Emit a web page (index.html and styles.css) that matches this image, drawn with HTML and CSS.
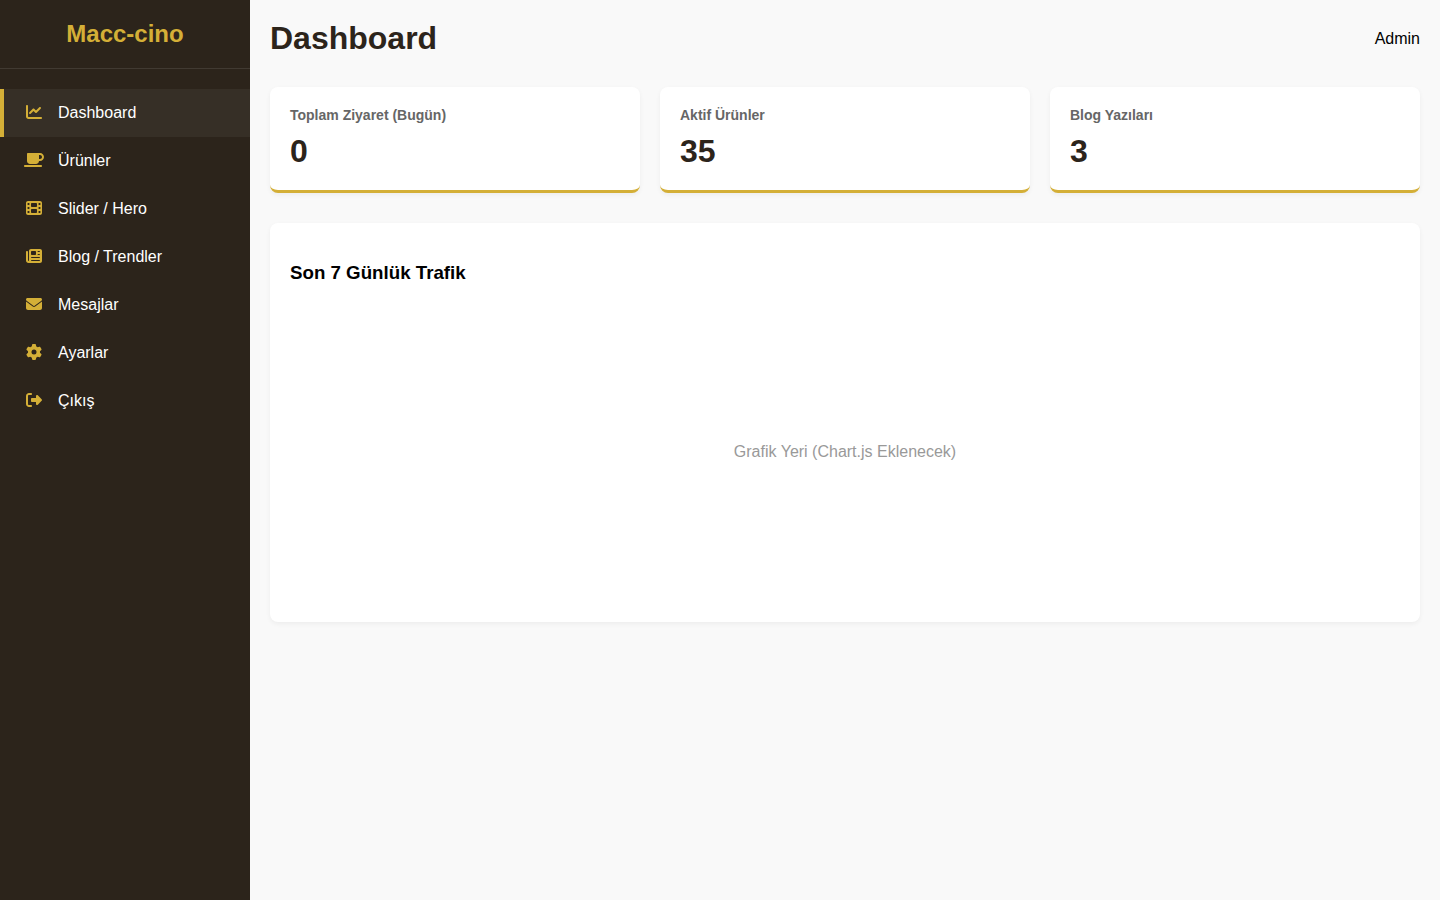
FILE: index.html
```html
<!DOCTYPE html>
<html lang="tr">
<head>
<meta charset="UTF-8">
<meta name="viewport" content="width=device-width, initial-scale=1.0">
<title>Dashboard</title>
<link rel="stylesheet" href="styles.css">
</head>
<body>

<aside class="sidebar">
    <h2 class="brand">Macc-cino</h2>
    <nav class="menu">
        <a href="#" class="active">
            <svg class="icon" viewBox="0 0 512 512" aria-hidden="true"><path d="M64 64c0-17.7-14.3-32-32-32S0 46.3 0 64V400c0 44.2 35.8 80 80 80H480c17.7 0 32-14.3 32-32s-14.3-32-32-32H80c-8.8 0-16-7.2-16-16V64zm406.6 86.6c12.5-12.5 12.5-32.8 0-45.3s-32.8-12.5-45.3 0L320 210.7l-57.4-57.4c-12.5-12.5-32.8-12.5-45.3 0l-112 112c-12.5 12.5-12.5 32.8 0 45.3s32.8 12.5 45.3 0L240 221.3l57.4 57.4c12.5 12.5 32.8 12.5 45.3 0l128-128z"/></svg>
            Dashboard
        </a>
        <a href="#">
            <svg class="icon" viewBox="0 0 640 512" aria-hidden="true"><path d="M96 64c0-17.7 14.3-32 32-32H448h64c70.7 0 128 57.3 128 128s-57.3 128-128 128H480c0 53-43 96-96 96H192c-53 0-96-43-96-96V64zM480 224h32c35.3 0 64-28.7 64-64s-28.7-64-64-64H480V224zM32 416H544c17.7 0 32 14.3 32 32s-14.3 32-32 32H32c-17.7 0-32-14.3-32-32s14.3-32 32-32z"/></svg>
            Ürünler
        </a>
        <a href="#">
            <svg class="icon" viewBox="0 0 512 512" aria-hidden="true"><path d="M0 96C0 60.7 28.7 32 64 32H448c35.3 0 64 28.7 64 64V416c0 35.3-28.7 64-64 64H64c-35.3 0-64-28.7-64-64V96zM48 368v32c0 8.8 7.2 16 16 16H96c8.8 0 16-7.2 16-16V368c0-8.8-7.2-16-16-16H64c-8.8 0-16 7.2-16 16zm368-16c-8.8 0-16 7.2-16 16v32c0 8.8 7.2 16 16 16h32c8.8 0 16-7.2 16-16V368c0-8.8-7.2-16-16-16H416zM48 240v32c0 8.8 7.2 16 16 16H96c8.8 0 16-7.2 16-16V240c0-8.8-7.2-16-16-16H64c-8.8 0-16 7.2-16 16zm368-16c-8.8 0-16 7.2-16 16v32c0 8.8 7.2 16 16 16h32c8.8 0 16-7.2 16-16V240c0-8.8-7.2-16-16-16H416zM48 112v32c0 8.8 7.2 16 16 16H96c8.8 0 16-7.2 16-16V112c0-8.8-7.2-16-16-16H64c-8.8 0-16 7.2-16 16zM416 96c-8.8 0-16 7.2-16 16v32c0 8.8 7.2 16 16 16h32c8.8 0 16-7.2 16-16V112c0-8.8-7.2-16-16-16H416zM160 128v64c0 17.7 14.3 32 32 32H320c17.7 0 32-14.3 32-32V128c0-17.7-14.3-32-32-32H192c-17.7 0-32 14.3-32 32zm32 160c-17.7 0-32 14.3-32 32v64c0 17.7 14.3 32 32 32H320c17.7 0 32-14.3 32-32V320c0-17.7-14.3-32-32-32H192z"/></svg>
            Slider / Hero
        </a>
        <a href="#">
            <svg class="icon" viewBox="0 0 512 512" aria-hidden="true"><path d="M96 96c0-35.3 28.7-64 64-64H448c35.3 0 64 28.7 64 64V416c0 35.3-28.7 64-64 64H80c-44.2 0-80-35.8-80-80V128c0-17.7 14.3-32 32-32s32 14.3 32 32V400c0 8.8 7.2 16 16 16s16-7.2 16-16V96zm64 24v80c0 13.3 10.7 24 24 24H296c13.3 0 24-10.7 24-24V120c0-13.3-10.7-24-24-24H184c-13.3 0-24 10.7-24 24zm208-8c0 8.8 7.2 16 16 16h48c8.8 0 16-7.2 16-16s-7.2-16-16-16H384c-8.8 0-16 7.2-16 16zm0 96c0 8.8 7.2 16 16 16h48c8.8 0 16-7.2 16-16s-7.2-16-16-16H384c-8.8 0-16 7.2-16 16zM160 304c0 8.8 7.2 16 16 16H432c8.8 0 16-7.2 16-16s-7.2-16-16-16H176c-8.8 0-16 7.2-16 16zm0 96c0 8.8 7.2 16 16 16H432c8.8 0 16-7.2 16-16s-7.2-16-16-16H176c-8.8 0-16 7.2-16 16z"/></svg>
            Blog / Trendler
        </a>
        <a href="#">
            <svg class="icon" viewBox="0 0 512 512" aria-hidden="true"><path d="M48 64C21.5 64 0 85.5 0 112c0 15.1 7.1 29.3 19.2 38.4L236.8 313.6c11.4 8.5 27 8.5 38.4 0L492.8 150.4c12.1-9.1 19.2-23.3 19.2-38.4c0-26.5-21.5-48-48-48H48zM0 176V384c0 35.3 28.7 64 64 64H448c35.3 0 64-28.7 64-64V176L294.4 339.2c-22.8 17.1-54 17.1-76.8 0L0 176z"/></svg>
            Mesajlar
        </a>
        <a href="#">
            <svg class="icon" viewBox="0 0 512 512" aria-hidden="true"><path d="M495.9 166.6c3.2 8.7 .5 18.4-6.4 24.6l-43.3 39.4c1.1 8.3 1.7 16.8 1.7 25.4s-.6 17.1-1.7 25.4l43.3 39.4c6.9 6.2 9.6 15.9 6.4 24.6c-4.4 11.9-9.7 23.3-15.8 34.3l-4.7 8.1c-6.6 11-14 21.4-22.1 31.2c-5.9 7.2-15.7 9.6-24.5 6.8l-55.7-17.7c-13.4 10.3-28.2 18.9-44 25.4l-12.5 57.1c-2 9.1-9 16.3-18.2 17.8c-13.8 2.3-28 3.5-42.5 3.5s-28.7-1.2-42.5-3.5c-9.2-1.5-16.2-8.7-18.2-17.8l-12.5-57.1c-15.8-6.5-30.6-15.1-44-25.4L83.1 425.9c-8.8 2.8-18.6 .3-24.5-6.8c-8.1-9.8-15.5-20.2-22.1-31.2l-4.7-8.1c-6.1-11-11.4-22.4-15.8-34.3c-3.2-8.7-.5-18.4 6.4-24.6l43.3-39.4C64.6 273.1 64 264.6 64 256s.6-17.1 1.7-25.4L22.4 191.2c-6.9-6.2-9.6-15.9-6.4-24.6c4.4-11.9 9.7-23.3 15.8-34.3l4.7-8.1c6.6-11 14-21.4 22.1-31.2c5.9-7.2 15.7-9.6 24.5-6.8l55.7 17.7c13.4-10.3 28.2-18.9 44-25.4l12.5-57.1c2-9.1 9-16.3 18.2-17.8C227.3 1.2 241.5 0 256 0s28.7 1.2 42.5 3.5c9.2 1.5 16.2 8.7 18.2 17.8l12.5 57.1c15.8 6.5 30.6 15.1 44 25.4l55.7-17.7c8.8-2.8 18.6-.3 24.5 6.8c8.1 9.8 15.5 20.2 22.1 31.2l4.7 8.1c6.1 11 11.4 22.4 15.8 34.3zM256 336a80 80 0 1 0 0-160 80 80 0 1 0 0 160z"/></svg>
            Ayarlar
        </a>
        <a href="#">
            <svg class="icon" viewBox="0 0 512 512" aria-hidden="true"><path d="M377.9 105.9L500.7 228.7c7.2 7.2 11.3 17.1 11.3 27.3s-4.1 20.1-11.3 27.3L377.9 406.1c-6.4 6.4-15 9.9-24 9.9c-18.7 0-33.9-15.2-33.9-33.9l0-62.1-128 0c-17.7 0-32-14.3-32-32l0-64c0-17.7 14.3-32 32-32l128 0 0-62.1c0-18.7 15.2-33.9 33.9-33.9c9 0 17.6 3.6 24 9.9zM160 96L96 96c-17.7 0-32 14.3-32 32l0 256c0 17.7 14.3 32 32 32l64 0c17.7 0 32 14.3 32 32s-14.3 32-32 32l-64 0c-53 0-96-43-96-96L0 128C0 75 43 32 96 32l64 0c17.7 0 32 14.3 32 32s-14.3 32-32 32z"/></svg>
            Çıkış
        </a>
    </nav>
</aside>

<main class="content">
    <header class="topbar">
        <h1>Dashboard</h1>
        <div class="user">Admin</div>
    </header>

    <div class="stats">
        <div class="stat-card">
            <h3>Toplam Ziyaret (Bugün)</h3>
            <div class="number">0</div>
        </div>
        <div class="stat-card">
            <h3>Aktif Ürünler</h3>
            <div class="number">35</div>
        </div>
        <div class="stat-card">
            <h3>Blog Yazıları</h3>
            <div class="number">3</div>
        </div>
    </div>

    <section class="panel">
        <h3>Son 7 Günlük Trafik</h3>
        <div class="chart-placeholder">Grafik Yeri (Chart.js Eklenecek)</div>
    </section>
</main>

</body>
</html>
```

FILE: styles.css
```css
:root {
    --dark: #2c241b;
    --gold: #d4af37;
    --bg: #f9f9f9;
}

* {
    box-sizing: border-box;
}

body {
    margin: 0;
    display: flex;
    min-height: 100vh;
    font-family: "Liberation Sans", Arial, sans-serif;
    background: var(--bg);
}

/* Sidebar */
.sidebar {
    width: 250px;
    flex-shrink: 0;
    background: var(--dark);
    color: #fff;
}

.brand {
    margin: 0;
    padding: 20px;
    font-size: 24px;
    line-height: 28px;
    text-align: center;
    color: var(--gold);
    border-bottom: 1px solid rgba(255, 255, 255, 0.1);
}

.menu {
    padding: 20px 0;
}

.menu a {
    display: flex;
    align-items: flex-start;
    padding: 15px 20px;
    line-height: 18px;
    color: #fff;
    text-decoration: none;
    border-left: 4px solid transparent;
}

.menu a:hover,
.menu a.active {
    background: rgba(255, 255, 255, 0.05);
    border-left-color: var(--gold);
}

.icon {
    width: 20px;
    height: 16px;
    margin-right: 14px;
    fill: var(--gold);
}

/* Main content */
.content {
    flex: 1;
    padding: 20px;
}

.topbar {
    display: flex;
    justify-content: space-between;
    align-items: center;
    margin-bottom: 30px;
}

.topbar h1 {
    margin: 0;
    font-size: 32px;
    line-height: 37px;
    color: var(--dark);
}

.stats {
    display: grid;
    grid-template-columns: repeat(auto-fit, minmax(200px, 1fr));
    gap: 20px;
    margin-bottom: 30px;
}

.stat-card {
    padding: 20px;
    background: #fff;
    border-radius: 8px;
    border-bottom: 3px solid var(--gold);
    box-shadow: 0 2px 5px rgba(0, 0, 0, 0.05);
}

.stat-card h3 {
    margin: 0 0 10px;
    font-size: 14px;
    line-height: 16px;
    color: #666;
}

.number {
    font-size: 32px;
    line-height: 37px;
    font-weight: bold;
    color: var(--dark);
}

.panel {
    padding: 20px;
    background: #fff;
    border-radius: 8px;
    box-shadow: 0 2px 5px rgba(0, 0, 0, 0.05);
}

.chart-placeholder {
    display: flex;
    align-items: center;
    justify-content: center;
    height: 300px;
    color: #999;
}
```
